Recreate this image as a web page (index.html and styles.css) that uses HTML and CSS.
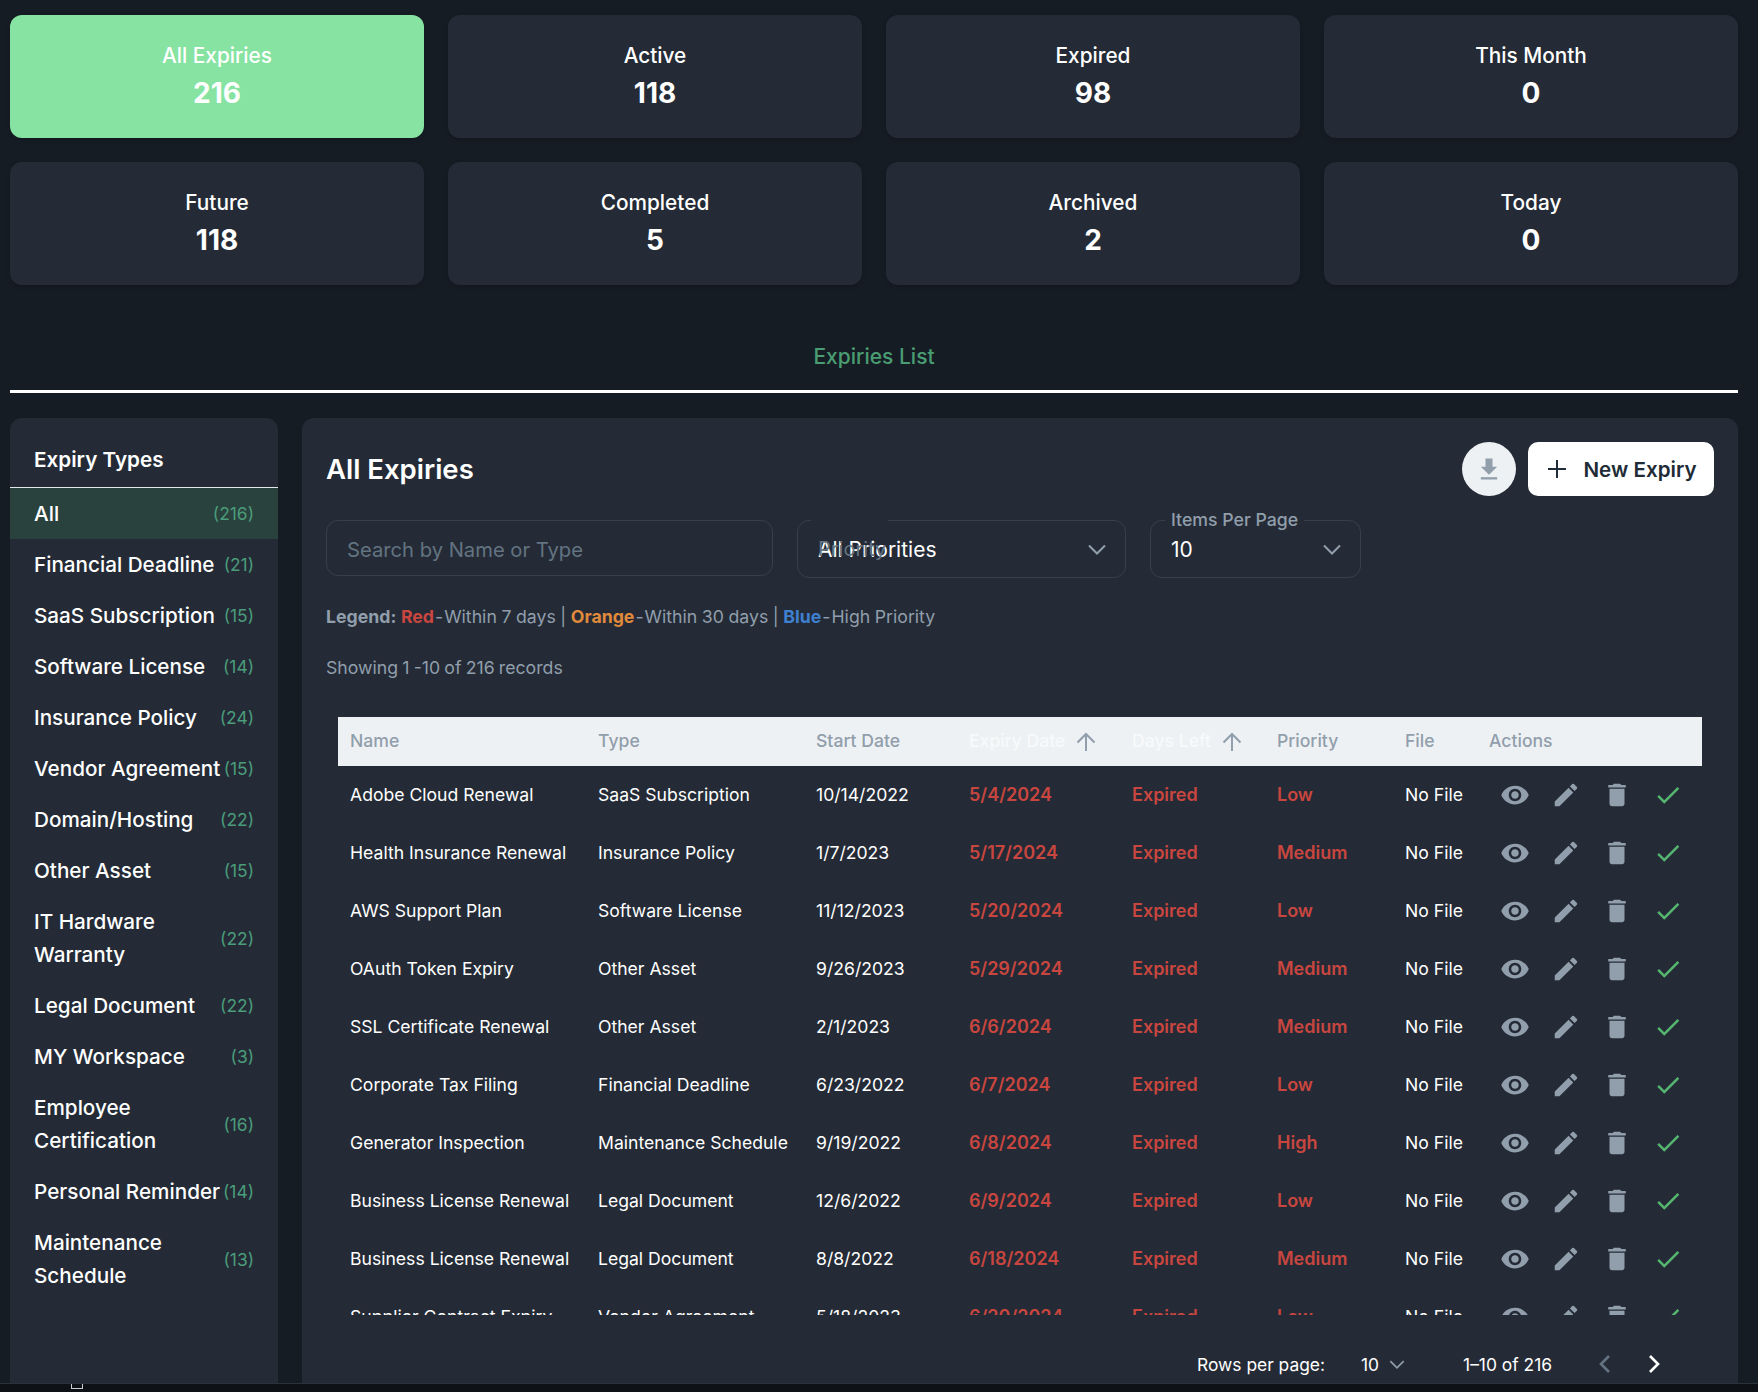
FILE: index.html
```html
<!DOCTYPE html>
<html>
<head>
    <meta charset="UTF-8">
    <title>Expiries</title>
    <link rel="stylesheet" href="styles.css">
</head>
<body>
    <div class="page">
        <div class="stats" id="stats"></div>

        <div class="tabs"><span class="tab">Expiries List</span></div>

        <div class="columns">
            <aside class="sidebar">
                <h3 class="sidebar-title">Expiry Types</h3>
                <div id="types"></div>
            </aside>

            <main class="panel">
                <div class="panel-head">
                    <h2>All Expiries</h2>
                    <div class="panel-buttons">
                        <button class="round-btn">
                            <svg width="28" height="28" viewBox="0 0 24 24" fill="#919eab"><path d="M9 3h6v7h4l-7 7-7-7h4z"/><rect x="5" y="19" width="14" height="2"/></svg>
                        </button>
                        <button class="new-btn">
                            <svg width="24" height="24" viewBox="0 0 24 24" fill="none" stroke="#212b36" stroke-width="2"><path d="M12 3v18M3 12h18"/></svg>
                            New Expiry
                        </button>
                    </div>
                </div>

                <div class="filters">
                    <div class="field search">Search by Name or Type</div>
                    <div class="field select priority">
                        <span class="notch"></span>
                        <span class="ghost-label">Priority</span>
                        <span>All Priorities</span>
                        <svg class="chev" width="24" height="24" viewBox="0 0 24 24" fill="none" stroke="#919eab" stroke-width="2"><path d="M4 8.500l8 8 8-8"/></svg>
                    </div>
                    <div class="field select items">
                        <span class="float-label">Items Per Page</span>
                        <span>10</span>
                        <svg class="chev" width="24" height="24" viewBox="0 0 24 24" fill="none" stroke="#919eab" stroke-width="2"><path d="M4 8.500l8 8 8-8"/></svg>
                    </div>
                </div>

                <p class="legend"><b>Legend:</b> <b class="red">Red</b><span class="dash">-</span>Within 7 days | <b class="orange">Orange</b><span class="dash">-</span>Within 30 days | <b class="blue">Blue</b><span class="dash">-</span>High Priority</p>
                <p class="showing">Showing 1 -10 of 216 records</p>

                <div class="table-wrap">
                    <table>
                        <thead>
                            <tr>
                                <th class="c-name">Name</th>
                                <th class="c-type">Type</th>
                                <th class="c-start">Start Date</th>
                                <th class="c-expiry"><div class="th-sort"><span class="sorted">Expiry Date</span><svg class="sort" width="24" height="24" viewBox="0 0 24 24" fill="none" stroke="#919eab" stroke-width="2"><path d="M12 21V4M3.500 12.500L12 4l8.500 8.500"/></svg></div></th>
                                <th class="c-days"><div class="th-sort"><span class="sorted">Days Left</span><svg class="sort" width="24" height="24" viewBox="0 0 24 24" fill="none" stroke="#919eab" stroke-width="2"><path d="M12 21V4M3.500 12.500L12 4l8.500 8.500"/></svg></div></th>
                                <th class="c-priority">Priority</th>
                                <th class="c-file">File</th>
                                <th class="c-actions">Actions</th>
                            </tr>
                        </thead>
                        <tbody id="rows"></tbody>
                    </table>
                </div>

                <div class="pager">
                    <span>Rows per page:</span>
                    <span class="pager-size">10
                        <svg width="20" height="20" viewBox="0 0 24 24" fill="none" stroke="#919eab" stroke-width="2"><path d="M4 8.500l8 8 8-8"/></svg>
                    </span>
                    <span class="pager-range">1–10 of 216</span>
                    <svg width="24" height="24" viewBox="0 0 24 24" fill="none" stroke="#637381" stroke-width="2.600"><path d="M16 4l-8 8 8 8"/></svg>
                    <svg class="pager-next" width="24" height="24" viewBox="0 0 24 24" fill="none" stroke="#fff" stroke-width="2.600"><path d="M8 4l8 8-8 8"/></svg>
                </div>
            </main>
        </div>
    </div>
    <div class="bottom-bar"><span class="bottom-mark"></span></div>

    <script>
        const stats = [
            ['All Expiries', 216], ['Active', 118], ['Expired', 98], ['This Month', 0],
            ['Future', 118], ['Completed', 5], ['Archived', 2], ['Today', 0]
        ];
        const types = [
            ['All', 216], ['Financial Deadline', 21], ['SaaS Subscription', 15], ['Software License', 14],
            ['Insurance Policy', 24], ['Vendor Agreement', 15], ['Domain/Hosting', 22], ['Other Asset', 15],
            ['IT Hardware Warranty', 22], ['Legal Document', 22], ['MY Workspace', 3],
            ['Employee Certification', 16], ['Personal Reminder', 14], ['Maintenance Schedule', 13]
        ];
        const rows = [
            ['Adobe Cloud Renewal', 'SaaS Subscription', '10/14/2022', '5/4/2024', 'Low'],
            ['Health Insurance Renewal', 'Insurance Policy', '1/7/2023', '5/17/2024', 'Medium'],
            ['AWS Support Plan', 'Software License', '11/12/2023', '5/20/2024', 'Low'],
            ['OAuth Token Expiry', 'Other Asset', '9/26/2023', '5/29/2024', 'Medium'],
            ['SSL Certificate Renewal', 'Other Asset', '2/1/2023', '6/6/2024', 'Medium'],
            ['Corporate Tax Filing', 'Financial Deadline', '6/23/2022', '6/7/2024', 'Low'],
            ['Generator Inspection', 'Maintenance Schedule', '9/19/2022', '6/8/2024', 'High'],
            ['Business License Renewal', 'Legal Document', '12/6/2022', '6/9/2024', 'Low'],
            ['Business License Renewal', 'Legal Document', '8/8/2022', '6/18/2024', 'Medium'],
            ['Supplier Contract Expiry', 'Vendor Agreement', '5/18/2023', '6/20/2024', 'Low']
        ];

        const actions = `
            <div class="actions">
                <svg width="30" height="30" viewBox="0 0 24 24" fill="#919eab"><path d="M12 4.500C7 4.500 2.730 7.610 1 12c1.730 4.390 6 7.500 11 7.500s9.270-3.110 11-7.500c-1.730-4.390-6-7.500-11-7.500zM12 17c-2.760 0-5-2.240-5-5s2.240-5 5-5 5 2.240 5 5-2.240 5-5 5zm0-8c-1.660 0-3 1.340-3 3s1.340 3 3 3 3-1.340 3-3-1.340-3-3-3z"/></svg>
                <svg width="30" height="30" viewBox="0 0 24 24" fill="#919eab"><path d="M3 17.250V21h3.750L17.810 9.940l-3.750-3.750L3 17.250zM20.710 7.040c.39-.39.39-1.020 0-1.410l-2.340-2.340a1 1 0 0 0-1.410 0l-1.830 1.830 3.750 3.750 1.830-1.830z"/></svg>
                <svg width="30" height="30" viewBox="0 0 24 24" fill="#919eab"><path d="M6 19c0 1.100.9 2 2 2h8c1.100 0 2-.9 2-2V7H6v12zM19 4h-3.500l-1-1h-5l-1 1H5v2h14V4z"/></svg>
                <svg width="30" height="30" viewBox="0 0 24 24" fill="#54b66f"><path d="M9 16.170 4.830 12l-1.420 1.410L9 19 21 7l-1.410-1.410z"/></svg>
            </div>`;

        document.getElementById('stats').innerHTML = stats.map((s, i) =>
            `<div class="stat${i === 0 ? ' stat-active' : ''}"><span>${s[0]}</span><strong>${s[1]}</strong></div>`
        ).join('');

        document.getElementById('types').innerHTML = types.map((t, i) =>
            `<div class="type${i === 0 ? ' type-active' : ''}"><span class="type-name">${t[0]}</span><span class="type-count">(${t[1]})</span></div>`
        ).join('');

        document.getElementById('rows').innerHTML = rows.map(r => `
            <tr>
                <td>${r[0]}</td>
                <td>${r[1]}</td>
                <td>${r[2]}</td>
                <td class="late">${r[3]}</td>
                <td class="late">Expired</td>
                <td class="late">${r[4]}</td>
                <td>No File</td>
                <td>${actions}</td>
            </tr>`).join('');
    </script>
</body>
</html>
```

FILE: styles.css
```css
* {
    box-sizing: border-box;
}
html, body {
    height: 100%;
}
body {
    margin: 0;
    background: #161c24;
    color: #fff;
    font-family: "Inter", "Liberation Sans", sans-serif;
    overflow: hidden;
}
.page {
    padding: 15px 20px 0 10px;
    height: 1383px;
    display: flex;
    flex-direction: column;
}
.stats {
    display: grid;
    grid-template-columns: repeat(4, 1fr);
    gap: 24px;
}
.stat {
    height: 123px;
    background: #242b36;
    border-radius: 12px;
    display: flex;
    flex-direction: column;
    align-items: center;
    justify-content: center;
    gap: 8px;
    font-size: 20.800px;
    font-weight: 500;
    box-shadow: 0 2px 4px rgba(0, 0, 0, 0.15);
}
.stat strong {
    font-size: 28px;
    font-weight: 700;
}
.stat-active {
    background: #86e3a2;
}
.tabs {
    margin-top: 47px;
    height: 61px;
    border-bottom: 3px solid #fff;
    text-align: center;
}
.tab {
    color: #4a9c72;
    font-size: 21px;
    font-weight: 500;
    line-height: 50px;
}
.columns {
    flex: 1;
    min-height: 0;
    margin-top: 25px;
    display: flex;
    gap: 24px;
}
.sidebar {
    width: 268px;
    flex: none;
    background: #242b36;
    border-radius: 12px 12px 0 0;
}
.sidebar-title {
    margin: 0;
    height: 70px;
    padding: 29px 24px 0;
    font-size: 20.700px;
    font-weight: 600;
    border-bottom: 1px solid #e0e6ea;
}
.type {
    display: flex;
    align-items: center;
    justify-content: space-between;
    padding: 9px 24px;
    font-size: 20.700px;
    font-weight: 500;
    line-height: 33px;
}
.type-active {
    background: #2a423e;
}
.type-count {
    flex: none;
    color: #4a9c7a;
    font-size: 17.400px;
    font-weight: 400;
}
.panel {
    flex: 1;
    min-width: 0;
    background: #242b36;
    border-radius: 12px 12px 0 0;
    padding: 24px 24px 0;
    display: flex;
    flex-direction: column;
}
.panel-head {
    display: flex;
    align-items: center;
    justify-content: space-between;
}
.panel-head h2 {
    margin: 0;
    font-size: 27.500px;
    font-weight: 600;
}
.panel-buttons {
    display: flex;
    gap: 12px;
}
.round-btn {
    width: 54px;
    height: 54px;
    border: 0;
    border-radius: 50%;
    background: #eef1f4;
    display: flex;
    align-items: center;
    justify-content: center;
}
.new-btn {
    width: 186px;
    height: 54px;
    border: 0;
    border-radius: 10px;
    background: #fff;
    color: #212b36;
    font-family: inherit;
    font-size: 20.600px;
    font-weight: 600;
    display: flex;
    align-items: center;
    justify-content: center;
    gap: 14px;
}
.filters {
    margin-top: 24px;
    display: flex;
    align-items: flex-start;
    gap: 24px;
}
.field {
    height: 58px;
    border: 1px solid #36404c;
    border-radius: 12px;
    display: flex;
    align-items: center;
    padding: 0 16px 0 20px;
    font-size: 21px;
    position: relative;
}
.search {
    width: 447px;
    height: 56px;
    padding-top: 3px;
    font-size: 20.200px;
    color: #637381;
}
.select {
    justify-content: space-between;
}
.priority {
    width: 329px;
}
.items {
    width: 211px;
}
.notch {
    position: absolute;
    left: 13px;
    top: -1px;
    width: 77px;
    height: 1px;
    background: #242b36;
}
.ghost-label {
    position: absolute;
    left: 20px;
    color: #637381;
    font-size: 20px;
}
.float-label {
    position: absolute;
    left: 14px;
    top: -12px;
    padding: 0 6px;
    background: #242b36;
    color: #919eab;
    font-size: 17.700px;
    font-weight: 500;
}
.legend {
    margin: 25px 0 0;
    font-size: 17.700px;
    line-height: 28px;
    word-spacing: -0.4px;
    color: #919eab;
}
.dash {
    margin: 0 1px;
}
.red {
    color: #c8463f;
}
.orange {
    color: #e08a3c;
}
.blue {
    color: #3f7fd0;
}
.showing {
    margin: 23px 0 0;
    font-size: 17.700px;
    line-height: 28px;
    word-spacing: -0.8px;
    color: #919eab;
}
.table-wrap {
    margin: 35px 0 0 12px;
    width: 1364px;
    height: 598px;
    overflow: hidden;
}
table {
    width: 100%;
    border-collapse: collapse;
    table-layout: fixed;
    font-size: 17.600px;
}
th {
    height: 49px;
    background: #eef1f4;
    color: #919eab;
    text-align: left;
    font-weight: 500;
    padding: 0 12px 2px;
}
td {
    height: 58px;
    padding: 0 12px 2px;
    white-space: nowrap;
}
.c-name { width: 248px; }
.c-type { width: 218px; }
.c-start { width: 153px; }
.c-expiry { width: 163px; }
.c-days { width: 145px; }
.c-priority { width: 128px; }
.c-file { width: 84px; }
.th-sort {
    display: flex;
    align-items: center;
    white-space: nowrap;
}
.sorted {
    color: #f8f9fa;
}
.sort {
    flex: none;
    margin-left: 9px;
    margin-top: 2px;
}
.late {
    color: #c8463f;
    font-size: 18px;
    font-weight: 600;
}
.actions {
    display: flex;
    gap: 21px;
    padding: 2px 0 0 11px;
}
.pager {
    margin-top: 37px;
    display: flex;
    align-items: center;
    justify-content: flex-end;
    font-size: 17.400px;
    padding-right: 48px;
}
.pager-size {
    margin-left: 36px;
    display: flex;
    align-items: center;
    gap: 8px;
}
.pager-range {
    margin: 0 41px 0 56px;
}
.pager-next {
    margin-left: 25px;
}
.bottom-bar {
    height: 9px;
    border-top: 1px solid #2a323b;
    background: #0e1216;
    position: relative;
}
.bottom-mark {
    position: absolute;
    left: 71px;
    top: 0;
    width: 12px;
    height: 5px;
    border: 1px solid #ccc;
    border-top: 0;
}
```
